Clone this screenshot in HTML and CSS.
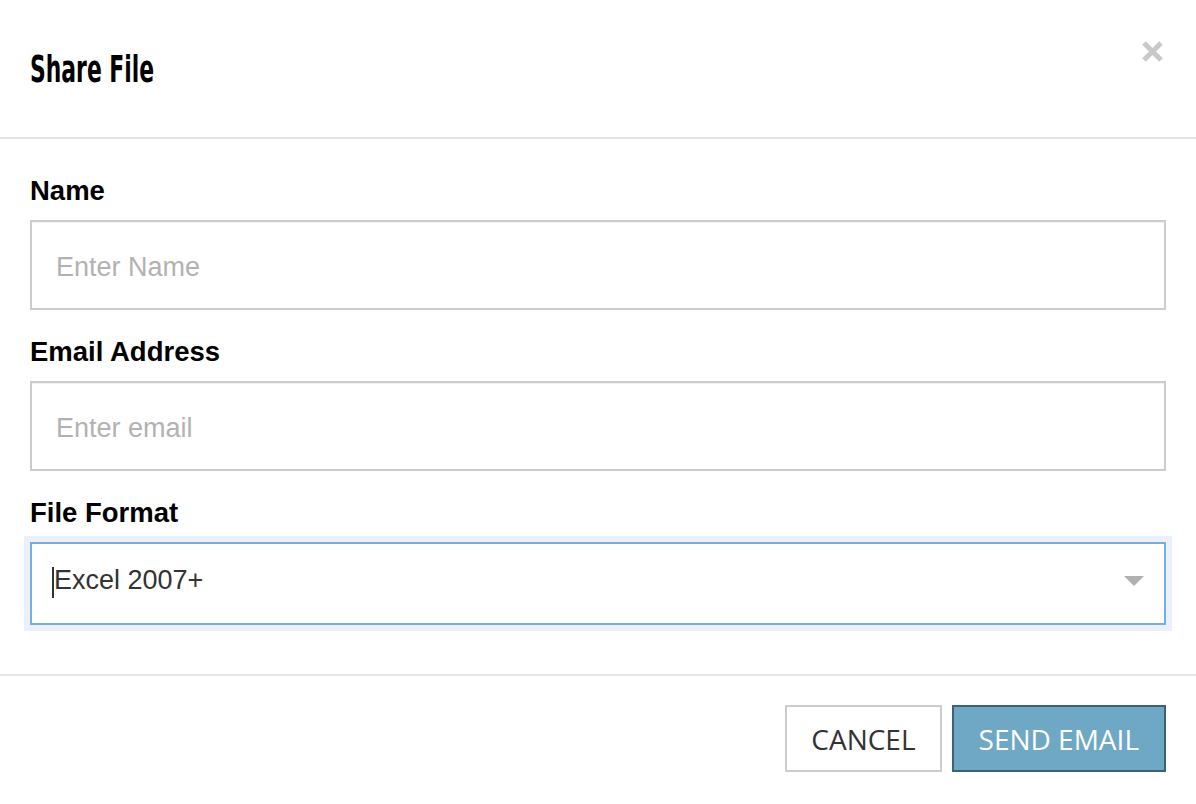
FILE: index.html
```html
<!DOCTYPE html>
<html lang="en">
<head>
<meta charset="utf-8">
<title>Share File</title>
<link rel="stylesheet" href="styles.css">
</head>
<body>
<div class="modal">
  <div class="modal-header">
    <h1 class="modal-title"><span class="title-text">Share File</span></h1>
    <button class="close" type="button" aria-label="Close">
      <svg width="21" height="21" viewBox="0 0 21 21"><path d="M2 2 L19 19 M19 2 L2 19" stroke="#c9c9c9" stroke-width="5" stroke-linecap="butt"/></svg>
    </button>
  </div>
  <div class="modal-body">
    <label class="field-label" for="name">Name</label>
    <input class="field-input" id="name" type="text" placeholder="Enter Name">
    <label class="field-label" for="email">Email Address</label>
    <input class="field-input" id="email" type="text" placeholder="Enter email">
    <label class="field-label">File Format</label>
    <div class="select">
      <span class="caret"></span><span class="select-value">Excel 2007+</span>
      <svg class="select-arrow" width="20" height="10" viewBox="0 0 20 10"><path d="M0 0 H20 L10 10 Z" fill="#b0b0b0"/></svg>
    </div>
  </div>
  <div class="modal-footer">
    <button class="btn btn-default" type="button">CANCEL</button>
    <button class="btn btn-primary" type="button">SEND EMAIL</button>
  </div>
</div>
</body>
</html>
```
FILE: styles.css
```css
html, body {
  margin: 0;
  padding: 0;
  background: #fff;
}
body {
  font-family: "Liberation Sans", Arial, sans-serif;
  color: #000;
}
.modal {
  width: 1196px;
  height: 804px;
  background: #fff;
  box-sizing: border-box;
}
.modal-header {
  display: flex;
  justify-content: space-between;
  align-items: flex-start;
  height: 139px;
  box-sizing: border-box;
  padding: 41px 33px 0 30px;
  border-bottom: 2px solid #e5e5e5;
}
.modal-title {
  margin: 8px 0 0 0;
  font-family: "DejaVu Sans Condensed", "DejaVu Sans", sans-serif;
  font-stretch: condensed;
  font-weight: 700;
  font-size: 38px;
  line-height: 40px;
  color: #000;
}
.title-text {
  display: inline-block;
  transform: scaleX(0.64);
  transform-origin: left center;
  white-space: nowrap;
}
.close {
  border: 0;
  background: none;
  padding: 0;
  margin: 0;
  width: 21px;
  height: 21px;
  display: block;
  cursor: pointer;
}
.close svg { display: block; }
.modal-body {
  padding: 36px 30px 49px 30px;
  display: flex;
  flex-direction: column;
}
.field-label {
  display: block;
  font-size: 27.5px;
  font-weight: 700;
  line-height: 32px;
  margin-bottom: 13px;
}
.field-input {
  display: block;
  width: 100%;
  height: 90px;
  box-sizing: border-box;
  border: 2px solid #cccccc;
  border-radius: 0;
  padding: 4px 24px 0 24px;
  font-family: "Liberation Sans", Arial, sans-serif;
  font-size: 27px;
  color: #333;
  margin: 0 0 26px 0;
  box-shadow: inset 0 1px 1px rgba(0,0,0,0.06);
  outline: none;
}
.field-input::placeholder {
  color: #b2b2b2;
}
.select {
  display: flex;
  align-items: center;
  height: 83px;
  box-sizing: border-box;
  border: 2px solid #78ade2;
  box-shadow: 0 0 0 6px #eaf1fb;
  padding: 0 20px 0 20px;
  font-size: 27px;
  color: #333;
}
.caret {
  display: inline-block;
  width: 2px;
  height: 31px;
  background: #333;
  margin-right: 0;
  margin-bottom: 2px;
}
.select-value {
  flex: 1;
  margin-bottom: 6px;
}
.select-arrow {
  display: block;
  margin-bottom: 6px;
}
.modal-footer {
  display: flex;
  justify-content: flex-end;
  gap: 10px;
  padding: 29px 30px 31px 30px;
  border-top: 2px solid #e5e5e5;
}
.btn {
  height: 67px;
  box-sizing: border-box;
  font-family: "Open Sans", sans-serif;
  font-size: 28px;
  line-height: 1;
  border-radius: 0;
  cursor: pointer;
}
.btn-default {
  background: #fff;
  border: 2px solid #cccccc;
  color: #333;
  padding: 0 24px;
}
.btn-primary {
  background: #6fa8c4;
  border: 2px solid #3e6273;
  color: #fff;
  padding: 0 25px;
}
```
